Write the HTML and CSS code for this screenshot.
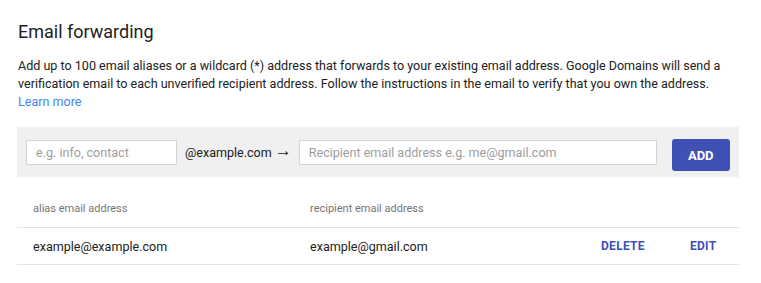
FILE: index.html
```html
<!DOCTYPE html>
<html>
<head>
<meta charset="utf-8">
<link rel="stylesheet" href="styles.css">
</head>
<body>
<div class="page">
  <h1 class="title">Email forwarding</h1>
  <p class="desc">Add up to 100 email aliases or a wildcard (*) address that forwards to your existing email address. Google Domains will send a verification email to each unverified recipient address. Follow the instructions in the email to verify that you own the address.<br><a class="link" href="#">Learn more</a></p>
  <div class="addbar">
    <input class="field alias" placeholder="e.g. info, contact">
    <span class="domain">@example.com</span>
    <span class="arrow">&rarr;</span>
    <input class="field recipient" placeholder="Recipient email address e.g. me@gmail.com">
    <button class="add">ADD</button>
  </div>
  <div class="table">
    <div class="row head">
      <div class="c1">alias email address</div>
      <div class="c2">recipient email address</div>
    </div>
    <div class="row item">
      <div class="c1">example@example.com</div>
      <div class="c2">example@gmail.com</div>
      <div class="actions"><a class="act del" href="#">DELETE</a><a class="act edit" href="#">EDIT</a></div>
    </div>
  </div>
</div>
</body>
</html>
```

FILE: styles.css
```css
* { box-sizing: border-box; }
body { margin: 0; background: #fff; font-family: Roboto, "Noto Sans", sans-serif; color: #212121; }
.page { padding: 0 22px 0 17px; }
.title { margin: 0; padding: 20px 0 0 1px; font-size: 18px; font-weight: 400; line-height: 24px; color: #212121; }
.desc { margin: 13px 0 0 1px; font-size: 12.55px; line-height: 18px; color: #212121; }
.link { color: #4285f4; text-decoration: none; }
.addbar { margin-top: 16px; height: 50px; background: #f0f0f0; display: flex; align-items: center; padding: 0 9px; }
.field { height: 25px; border: 1px solid #d4d4d4; background: #fff; font-family: Roboto, sans-serif; font-size: 12.55px; padding: 0 9px; color: #212121; outline: none; }
.field::placeholder { color: #9e9e9e; }
.alias { width: 151px; }
.domain { margin-left: 8px; font-size: 12.55px; color: #212121; }
.arrow { margin-left: 3px; font-size: 17px; line-height: 1; color: #212121; margin-top: -3px; }
.recipient { margin-left: 7px; width: 358px; }
.add { margin-left: 15px; width: 58px; height: 32px; border: 0; border-radius: 3px; background: #3f51b5; color: #fff; font-family: Roboto, sans-serif; font-weight: 700; font-size: 13px; margin-top: 6px; }
.row { display: flex; align-items: center; padding-left: 16px; }
.head { height: 51px; font-size: 11px; color: #757575; border-bottom: 1px solid #e4e4e4; padding-top: 12px; }
.item { height: 37px; font-size: 12.55px; border-bottom: 1px solid #e4e4e4; }
.c1 { width: 277px; }
.c2 { width: 291px; }
.actions { display: flex; }
.act { text-decoration: none; color: #3f51b5; font-weight: 700; font-size: 12px; letter-spacing: 0.3px; }
.edit { margin-left: 45px; }
```
